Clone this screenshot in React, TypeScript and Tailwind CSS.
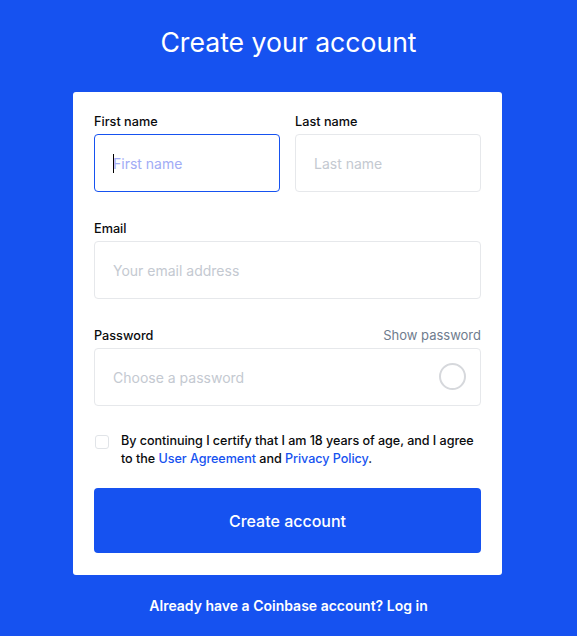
import { useState } from "react"

function Field({ label, placeholder, focused, type = "text", right }: { label: string; placeholder: string; focused?: boolean; type?: string; right?: React.ReactNode }) {
  return (
    <div className="flex flex-col flex-1">
      <div className="flex items-center justify-between h-[16px] mb-[4px]">
        <span className="text-[12.7px] font-medium text-[#0a0b0d]">{label}</span>
        {right}
      </div>
      <div
        className={
          focused
            ? "relative h-[58px] rounded-[4px] border border-[#1652f0] flex items-center pl-[18px]"
            : "relative h-[58px] rounded-[4px] border border-[#e6e8eb] flex items-center pl-[18px]"
        }
      >
        {focused && <span className="absolute left-[18px] top-[19px] w-px h-[19px] bg-black" />}
        <input
          type={type}
          placeholder={placeholder}
          className={
            focused
              ? "w-full bg-transparent outline-none text-[14px] placeholder:text-[#a1acf6]"
              : "w-full bg-transparent outline-none text-[14px] placeholder:text-[#c4c9d1]"
          }
        />
        {type === "password" && (
          <span className="absolute right-[14px] top-[14px] w-[27px] h-[27px] rounded-full border-2 border-[#d6d8dc]" />
        )}
      </div>
    </div>
  )
}

export default function App() {
  const [agreed, setAgreed] = useState(false)

  return (
    <div className="min-h-screen bg-[#1652f0] flex flex-col items-center pt-[26px] font-['Inter',sans-serif]">
      <h1 className="text-[26.6px] leading-[32px] text-white font-normal">Create your account</h1>

      <div className="mt-[34px] w-[429px] mr-[2px] bg-white rounded-[3px] px-[21px] pt-[22px] pb-[22px]">
        <div className="flex gap-[15px]">
          <Field label="First name" placeholder="First name" focused />
          <Field label="Last name" placeholder="Last name" />
        </div>
        <div className="mt-[29px]">
          <Field label="Email" placeholder="Your email address" />
        </div>
        <div className="mt-[29px]">
          <Field
            label="Password"
            placeholder="Choose a password"
            type="password"
            right={<span className="text-[13px] text-[#6f7c8e]">Show password</span>}
          />
        </div>

        <label className="mt-[26px] flex items-start gap-[12px] cursor-pointer">
          <span
            onClick={() => setAgreed(!agreed)}
            className={
              agreed
                ? "mt-[3px] ml-px w-[14px] h-[14px] shrink-0 rounded-[3px] border border-[#1652f0] bg-[#1652f0]"
                : "mt-[3px] ml-px w-[14px] h-[14px] shrink-0 rounded-[3px] border border-[#e1e4e8]"
            }
          />
          <span className="text-[12.6px] leading-[18px] font-medium text-[#0a0b0d] tracking-[-0.05px]">
            By continuing I certify that I am 18 years of age, and I agree to the{" "}
            <a className="text-[#1652f0]">User Agreement</a> and <a className="text-[#1652f0]">Privacy Policy</a>.
          </span>
        </label>

        <button className="mt-[20px] w-full h-[65px] rounded-[4px] bg-[#1652f0] text-white text-[16px] font-medium">
          Create account
        </button>
      </div>

      <p className="mt-[20px] text-[14px] font-semibold text-white">Already have a Coinbase account? Log in</p>
    </div>
  )
}
